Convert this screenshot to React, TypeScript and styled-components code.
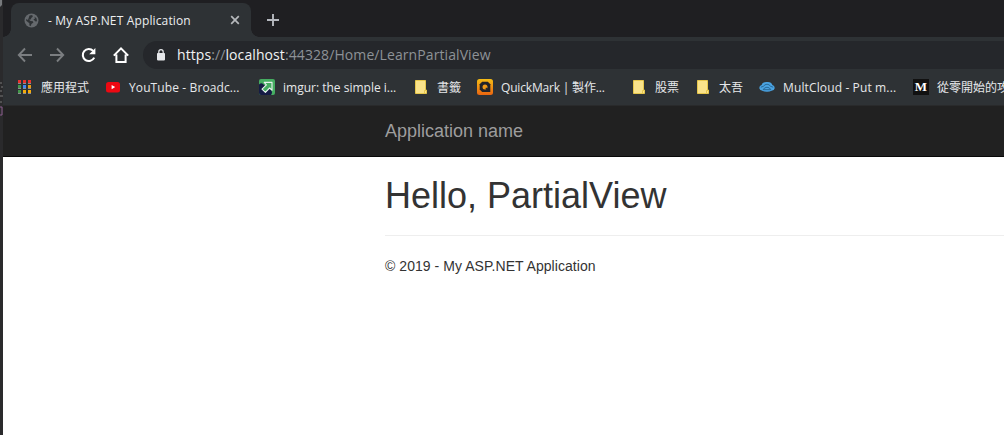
import React from 'react';
import styled, { createGlobalStyle } from 'styled-components';

const Global = createGlobalStyle`
  * { box-sizing: border-box; }
  html, body { margin: 0; background: #fff; overflow: hidden; }
`;
const uiFont = `"Open Sans", "Noto Sans CJK TC", sans-serif`;

const Desktop = styled.div`display: flex; width: 1004px; height: 435px; overflow: hidden;`;
const EditorEdge = styled.aside`width: 3px; flex: none; background: #2a2a2c;`;
const EditorMarks = styled.svg`display: block;`;
const Browser = styled.main`flex: 1; min-width: 0; display: flex; flex-direction: column; background: #fff;`;
const TabStrip = styled.header`height: 37px; flex: none; display: flex; align-items: flex-end; background: #1f1f22; padding-left: 8px;`;
const Tab = styled.div`
  position: relative; width: 240px; height: 34px; background: #2e3235; border-radius: 8px 8px 0 0;
  display: flex; align-items: center; padding: 0 11px 0 13px;
  &::before, &::after { content: ''; position: absolute; bottom: 0; width: 8px; height: 8px; }
  &::before { left: -8px; background: radial-gradient(circle at 0 0, transparent 7.5px, #2e3235 8px); }
  &::after { right: -8px; background: radial-gradient(circle at 100% 0, transparent 7.5px, #2e3235 8px); }
`;
const TabTitle = styled.span`
  flex: 1; margin-left: 9px; padding-top: 1px; font: 12px/18px ${uiFont}; letter-spacing: 0.14px; color: #eceef0; white-space: pre;
`;
const NewTab = styled.div`margin-left: 15px; height: 34px; display: flex; align-items: center;`;
const Toolbar = styled.nav`height: 36px; flex: none; background: #2e3235; display: flex; align-items: center; padding-left: 14px;`;
const NavButton = styled.span`width: 32px; height: 20px; flex: none; display: flex; align-items: center;`;
const AddressBar = styled.div`
  flex: 1; height: 28px; margin-left: -2px; border-radius: 14px 0 0 14px; background: #25272b;
  display: flex; align-items: center; padding-left: 13px;
`;
const Url = styled.span`
  margin-left: 11px; font: 14px/20px ${uiFont}; letter-spacing: 0.09px; color: #8d9297; white-space: pre;
  b { font-weight: 400; color: #f1f3f4; }
`;
const Bookmarks = styled.div`height: 32px; flex: none; background: #2e3235; display: flex; align-items: center; overflow: hidden; padding: 0 0 4px 14px;`;
const Bookmark = styled.div<{ $w: number }>`width: ${p => p.$w}px; flex: none; display: flex; align-items: center;`;
const BookmarkLabel = styled.span<{ $ls?: number }>`
  margin-left: 8px; padding-top: 2px; font: 12px/18px ${uiFont}; letter-spacing: ${p => p.$ls ?? 0}px; color: #e6e8ea; white-space: pre;
`;
const NavBar = styled.div`height: 52px; flex: none; background: #212121; border-top: 1px solid #292a2b; border-bottom: 1px solid #080808; padding-left: 382px;`;
const Brand = styled.a`font: 18px/50px "Liberation Sans", Arial, sans-serif; color: #9d9d9d;`;
const Content = styled.section`margin-left: 382px; font-family: "Liberation Sans", Arial, sans-serif; color: #333;`;
const Title = styled.h1`margin: 19px 0 0; font-size: 36px; line-height: 40px; font-weight: 400;`;
const Rule = styled.hr`margin: 19px 0 20px; border: 0; border-top: 1px solid #eee;`;
const Footer = styled.p`margin: 0; font-size: 14px; line-height: 20px; letter-spacing: 0.05px;`;

const Svg = styled.svg`display: block; flex: none;`;

const Globe = () => (
  <Svg width="15" height="15" viewBox="0 0 15 15">
    <circle cx="7.5" cy="7.5" r="7" fill="#65696d" />
    <path d="M5.5 2.4 8.2 2 8.8 3.8 7.2 5 7 6.2 5 6.8 6.6 8 8.8 8.2 9.4 9.4 7.4 11 6.8 13 5.4 12.4 5.4 10.2 2.2 7.8 2.2 6 4 7ZM10.4 3.6 12.6 5.4 13 8.2 11.6 8.4 9.4 6.6 11 5.4Z" fill="#2e3235" />
  </Svg>
);
const Arrow = ({ flip }: { flip?: boolean }) => (
  <Svg width="16" height="16" viewBox="0 0 16 16">
    <path d="M15 8H2M8 1.5 1.8 8 8 14.5" transform={flip ? 'matrix(-1 0 0 1 16 0)' : undefined} fill="none" stroke="#7b7e81" strokeWidth="1.9" />
  </Svg>
);
const Reload = () => (
  <Svg width="16" height="16" viewBox="0 0 16 16">
    <path d="M13.2 10.6A6 6 0 1 1 12.2 3.9" fill="none" stroke="#fff" strokeWidth="2.1" />
    <path d="M14.4 1V7.2H8.2Z" fill="#fff" />
  </Svg>
);
const Home = () => (
  <Svg width="16" height="18" viewBox="1 0 16 18">
    <path d="M1.8 9.6 9 2.4 16.2 9.6M4.4 8.6V16H13.6V8.6" fill="none" stroke="#fff" strokeWidth="2" />
  </Svg>
);
const Lock = () => (
  <Svg width="10" height="12" viewBox="0 0 10 12">
    <rect x="1" y="4" width="8" height="7.4" rx="0.8" fill="#e5e7ea" />
    <path d="M2.8 5V2.9a2.2 2.2 0 0 1 4.4 0V5" fill="none" stroke="#e5e7ea" strokeWidth="1.2" />
  </Svg>
);
const appColors = ['#e8322d', '#e8322d', '#e8322d', '#43984a', '#4285f4', '#e89b13', '#43984a', '#f5ab0a', '#f5ab0a'];
const Apps = () => (
  <Svg width="16" height="16" viewBox="0 0 16 16" shapeRendering="crispEdges">
    {appColors.map((c, i) => (
      <g key={i} transform={`translate(${1 + (i % 3) * 5} ${1 + Math.floor(i / 3) * 5})`}>
        <rect width="3" height="4" fill="#8b8e90" />
        <rect width="3" height="3" fill={c} />
      </g>
    ))}
  </Svg>
);
const YouTube = () => (
  <Svg width="16" height="16" viewBox="0 0 16 16">
    <rect x="1" y="3" width="14" height="10.5" rx="2.5" fill="#ed0912" />
    <path d="M6.6 5.9 10.2 8.1 6.6 10.3Z" fill="#fff" />
  </Svg>
);
const Imgur = () => (
  <Svg width="16" height="16" viewBox="0 0 16 16">
    <rect width="16" height="16" rx="2" fill="#45ad61" />
    <path d="M0 5.5Q3 3 5 6L12 11Q14 13.5 12 16H2a2 2 0 0 1-2-2Z" fill="#151b44" />
    <path d="M5.2 3.4H13V11.2L10.6 9 6.4 13.4 3 10.2 7.4 5.8Z" fill="#45ad61" stroke="#e9f3ef" strokeWidth="1.1" strokeLinejoin="round" />
  </Svg>
);
const Folder = () => (
  <Svg width="16" height="16" viewBox="0 0 16 16">
    <path d="M2.5 1.5H12.5V11H13.5V14.5H2.5Z" fill="#f9e28a" stroke="#e6c64b" />
    <path d="M11.5 14V11.5H13" fill="none" stroke="#e6c64b" />
  </Svg>
);
const QuickMark = () => (
  <Svg width="16" height="16" viewBox="0 0 16 16">
    <defs><linearGradient id="qm" x2="0" y2="1"><stop stopColor="#f5bd16" /><stop offset="1" stopColor="#ea6510" /></linearGradient></defs>
    <rect width="16" height="16" rx="2.5" fill="url(#qm)" />
    <path d="M5.2 2.8H10.8L13.3 5.3V13H5.2L2.7 10.5V5.3Z" fill="#22242a" />
    <circle cx="8" cy="7.9" r="2.5" fill="#f09a18" />
    <path d="M8.8 8.8 11 11" stroke="#22242a" strokeWidth="1.2" />
  </Svg>
);
const Cloud = () => (
  <Svg width="16" height="16" viewBox="0 0 16 16">
    <path d="M2.6 6A5 4 0 0 1 8 3 5 4 0 0 1 13.4 6 3 3 0 0 1 15.6 9.4Q15 11.2 13.2 11.6 8 14 2.8 11.6 1 11.2 .4 9.4A3 3 0 0 1 2.6 6Z" fill="#4aa3e2" />
    <path d="M1.8 8.2Q4.6 7.8 6 5.8 8 4.6 10 5.8 11.4 7.8 14.2 8.2M4.2 10.7Q5 8.5 8 8.2 11 8.5 11.8 10.7Z" fill="none" stroke="#24628f" strokeWidth="0.9" />
  </Svg>
);
const MediumBox = styled.span`
  width: 16px; height: 16px; flex: none; background: #111; color: #fff; text-align: center;
  font: bold 13px/16px "Liberation Serif", serif;
`;

const bookmarks = [
  { icon: <Apps />, text: '應用程式', w: 88 },
  { icon: <YouTube />, text: 'YouTube - Broadc...', w: 154, ls: 0.11 },
  { icon: <Imgur />, text: 'imgur: the simple i...', w: 154 },
  { icon: <Folder />, text: '書籤', w: 64 },
  { icon: <QuickMark />, text: 'QuickMark | 製作...', w: 154, ls: -0.18 },
  { icon: <Folder />, text: '股票', w: 64 },
  { icon: <Folder />, text: '太吾', w: 64 },
  { icon: <Cloud />, text: 'MultCloud - Put m...', w: 154, ls: 0.13 },
  { icon: <MediumBox>M</MediumBox>, text: '從零開始的攻', w: 154 },
];

export default function App() {
  return (
    <Desktop>
      <Global />
      <EditorEdge>
        <EditorMarks width="3" height="435">
          <path d="M0 0H2V5L0 7Z" fill="#77797c" />
          <path d="M0 83H2M1 87H3M0 91H2M0 96H3M0 102H2" stroke="#777" />
          <path d="M0 107H2V115H0" fill="none" stroke="#8b5d8d" />
        </EditorMarks>
      </EditorEdge>
      <Browser>
        <TabStrip>
          <Tab>
            <Globe />
            <TabTitle>- My ASP.NET Application</TabTitle>
            <Svg width="10" height="10" viewBox="0 0 10 10"><path d="M1.2 1.2 8.8 8.8M8.8 1.2 1.2 8.8" stroke="#b6b9bc" strokeWidth="1.7" /></Svg>
          </Tab>
          <NewTab>
            <Svg width="14" height="14" viewBox="0 0 14 14"><path d="M7 1V13M1 7H13" stroke="#b6b9bf" strokeWidth="1.9" /></Svg>
          </NewTab>
        </TabStrip>
        <Toolbar>
          <NavButton><Arrow /></NavButton>
          <NavButton><Arrow flip /></NavButton>
          <NavButton><Reload /></NavButton>
          <NavButton><Home /></NavButton>
          <AddressBar>
            <Lock />
            <Url><b>https</b>://<b>localhost</b>:44328/Home/LearnPartialView</Url>
          </AddressBar>
        </Toolbar>
        <Bookmarks>
          {bookmarks.map((b, i) => (
            <Bookmark key={i} $w={b.w}>{b.icon}<BookmarkLabel $ls={b.ls}>{b.text}</BookmarkLabel></Bookmark>
          ))}
        </Bookmarks>
        <NavBar><Brand>Application name</Brand></NavBar>
        <Content>
          <Title>Hello, PartialView</Title>
          <Rule />
          <Footer>© 2019 - My ASP.NET Application</Footer>
        </Content>
      </Browser>
    </Desktop>
  );
}
